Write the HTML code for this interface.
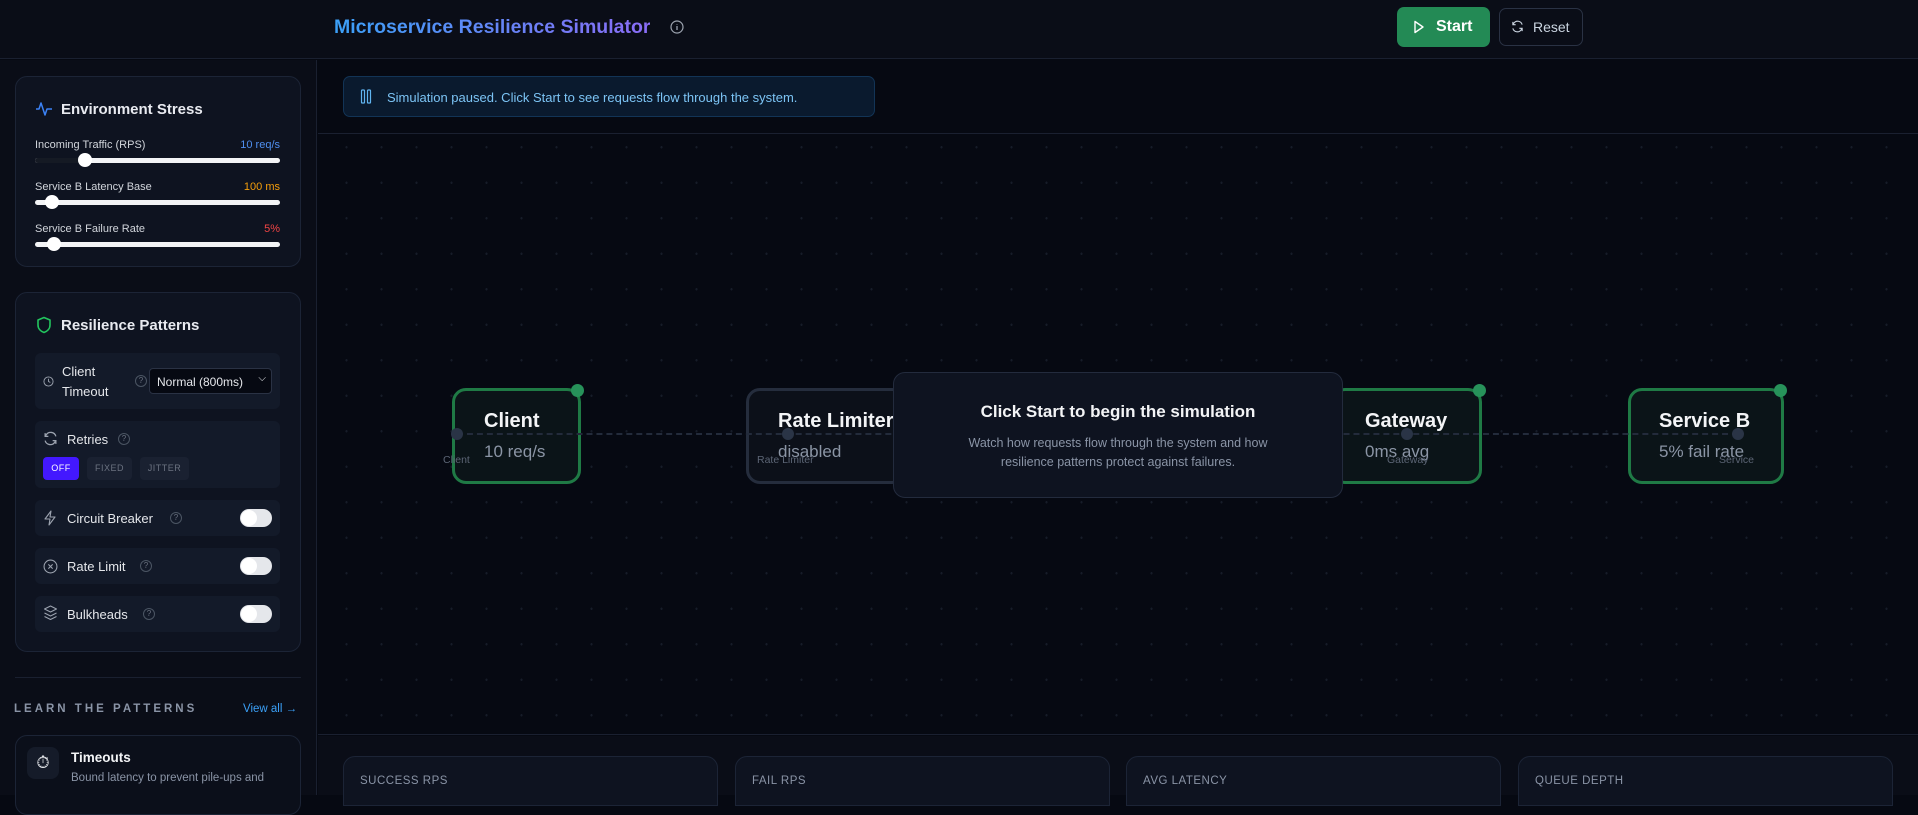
<!DOCTYPE html>
<html><head><meta charset="utf-8"><style>
*{box-sizing:border-box;margin:0;padding:0}
body{width:1918px;height:795px;overflow:hidden;background:#060912;font-family:"Liberation Sans",sans-serif;color:#e5e7eb;position:relative}
.a{position:absolute}
.hdr{left:0;top:0;width:1918px;height:59px;background:#0a0d17;border-bottom:1px solid #1a2030}
.title{left:334px;top:16px;font-size:19.5px;font-weight:bold;background:linear-gradient(90deg,#3ba0f7,#8a6cf6);-webkit-background-clip:text;color:transparent}
.side{left:0;top:60px;width:317px;height:735px;background:#0a0d17;border-right:1px solid #1a2030}
.card{background:#0e1320;border:1px solid #1c2436;border-radius:12px}
.h{font-size:15px;font-weight:bold;color:#e8eaf0}
.lbl{font-size:11px;color:#d1d5db}
.val{font-size:11px}
.track{height:5px;background:#f3f4f6;border-radius:3px}
.thumb{width:14px;height:14px;border-radius:50%;background:#fff;top:-5px}
.row{background:#131a29;border-radius:6px;left:35px;width:245px}
.tog{width:32px;height:18px;border-radius:9px;background:#e5e7eb}
.tog:before{content:"";position:absolute;left:1px;top:1px;width:16px;height:16px;border-radius:50%;background:#fff}
.q{width:12px;height:12px;border:1px solid #4b5563;border-radius:50%;font-size:8px;color:#6b7280;text-align:center;line-height:10px}
.rl{font-size:13px;color:#e5e7eb}
.pb{height:23px;border-radius:4px;font-size:9px;letter-spacing:.5px;text-align:center;line-height:23px;color:#6b7280;background:#1a2131}
.node{border-radius:14px;background:#0b1418;border:3px solid #1f7a45}
.nt{font-size:20px;font-weight:bold;color:#f3f4f6}
.ns{font-size:17px;color:#8b95a5}
.dot{width:12px;height:12px;border-radius:50%;background:#2a3446}
.gd{width:13px;height:13px;border-radius:50%;background:#27925a}
.sl{font-size:10.5px;color:#5c6575}
.stat{top:756px;height:50px;width:375px;background:#0e1320;border:1px solid #1c2436;border-radius:12px 12px 0 0}
.stat span{position:absolute;left:16px;top:18px;font-size:11.5px;color:#8a94a6;letter-spacing:.5px}
</style></head><body>
<div class="a hdr"></div>
<div class="a title">Microservice Resilience Simulator</div>
<svg class="a" style="left:670px;top:20px" width="14" height="14" viewBox="0 0 14 14"><circle cx="7" cy="7" r="6" fill="none" stroke="#9ca3af" stroke-width="1.2"/><path d="M7 6v4M7 4v.5" stroke="#9ca3af" stroke-width="1.3"/></svg>
<div class="a" style="left:1397px;top:7px;width:93px;height:40px;background:#238a55;border-radius:7px"></div>
<svg class="a" style="left:1413px;top:20px" width="12" height="14" viewBox="0 0 12 14"><path d="M2 1.5l8 5.5-8 5.5z" fill="none" stroke="#fff" stroke-width="1.4" stroke-linejoin="round"/></svg>
<div class="a" style="left:1436px;top:18px;font-size:16px;font-weight:bold;color:#fff">Start</div>
<div class="a" style="left:1499px;top:8px;width:84px;height:38px;border:1px solid #2a3244;border-radius:7px;background:#0a0d17"></div>
<svg class="a" style="left:1511px;top:20px" width="13" height="13" viewBox="0 0 14 14"><path d="M12 5A5 5 0 0 0 3 3.5L2 5M2 9a5 5 0 0 0 9 1.5L12 9M2 2v3h3M12 12V9H9" fill="none" stroke="#cbd5e1" stroke-width="1.2"/></svg>
<div class="a" style="left:1533px;top:19px;font-size:14px;color:#cbd5e1">Reset</div>

<div class="a side"></div>
<div class="a card" style="left:15px;top:76px;width:286px;height:191px"></div>
<svg class="a" style="left:35px;top:100px" width="18" height="18" viewBox="0 0 18 18"><path d="M1 9h3l2-6 4 12 2-6h5" fill="none" stroke="#3b82f6" stroke-width="1.5" stroke-linejoin="round"/></svg>
<div class="a h" style="left:61px;top:101px">Environment Stress</div>
<div class="a lbl" style="left:35px;top:139px">Incoming Traffic (RPS)</div><div class="a val" style="right:1638px;top:139px;color:#4f8ff0">10 req/s</div>
<div class="a track" style="left:35px;top:158px;width:245px"><div class="a" style="left:0;top:0;width:50px;height:5px;background:#151a24;border-radius:3px"></div><div class="a thumb" style="left:43px"></div></div>
<div class="a lbl" style="left:35px;top:181px">Service B Latency Base</div><div class="a val" style="right:1638px;top:181px;color:#f59e0b">100 ms</div>
<div class="a track" style="left:35px;top:200px;width:245px"><div class="a thumb" style="left:10px"></div></div>
<div class="a lbl" style="left:35px;top:223px">Service B Failure Rate</div><div class="a val" style="right:1638px;top:223px;color:#ef4444">5%</div>
<div class="a track" style="left:35px;top:242px;width:245px"><div class="a thumb" style="left:12px"></div></div>

<div class="a card" style="left:15px;top:292px;width:286px;height:360px"></div>
<svg class="a" style="left:36px;top:316px" width="16" height="18" viewBox="0 0 16 18"><path d="M8 1.5L2 4v5c0 4 3 6.5 6 7.5 3-1 6-3.5 6-7.5V4z" fill="none" stroke="#22c55e" stroke-width="1.6" stroke-linejoin="round"/></svg>
<div class="a h" style="left:61px;top:317px">Resilience Patterns</div>
<div class="a row" style="top:353px;height:56px"></div>
<svg class="a" style="left:43px;top:376px" width="11" height="11" viewBox="0 0 12 12"><circle cx="6" cy="6" r="5" fill="none" stroke="#9ca3af"/><path d="M6 3v3l2 1" fill="none" stroke="#9ca3af"/></svg>
<div class="a rl" style="left:62px;top:362px;line-height:20px">Client<br>Timeout</div>
<div class="a q" style="left:135px;top:375px">?</div>
<div class="a" style="left:149px;top:368px;width:123px;height:26px;background:#060912;border:1px solid #2a3244;border-radius:4px;font-size:12px;color:#e5e7eb;padding:6px 7px">Normal (800ms) <span style="position:absolute;right:5px;top:4px;font-size:10px">&#x2335;</span></div>
<div class="a row" style="top:421px;height:67px"></div>
<svg class="a" style="left:43px;top:431px" width="15" height="15" viewBox="0 0 14 14"><path d="M12 5A5 5 0 0 0 3 3.5L2 5M2 9a5 5 0 0 0 9 1.5L12 9M2 2v3h3M12 12V9H9" fill="none" stroke="#9ca3af" stroke-width="1.2"/></svg>
<div class="a rl" style="left:67px;top:432px">Retries</div>
<div class="a q" style="left:118px;top:433px">?</div>
<div class="a pb" style="left:43px;top:457px;width:36px;background:#4318ff;color:#fff">OFF</div>
<div class="a pb" style="left:87px;top:457px;width:45px">FIXED</div>
<div class="a pb" style="left:140px;top:457px;width:49px">JITTER</div>
<div class="a row" style="top:500px;height:36px"></div>
<svg class="a" style="left:43px;top:510px" width="14" height="16" viewBox="0 0 14 16"><path d="M8 1L2 9h5l-1 6 6-8H7z" fill="none" stroke="#9ca3af" stroke-width="1.1" stroke-linejoin="round"/></svg>
<div class="a rl" style="left:67px;top:511px">Circuit Breaker</div><div class="a q" style="left:170px;top:512px">?</div>
<div class="a tog" style="left:240px;top:509px"></div>
<div class="a row" style="top:548px;height:36px"></div>
<svg class="a" style="left:43px;top:559px" width="15" height="15" viewBox="0 0 14 14"><circle cx="7" cy="7" r="6" fill="none" stroke="#9ca3af"/><path d="M5 5l4 4M9 5l-4 4" stroke="#9ca3af"/></svg>
<div class="a rl" style="left:67px;top:559px">Rate Limit</div><div class="a q" style="left:140px;top:560px">?</div>
<div class="a tog" style="left:240px;top:557px"></div>
<div class="a row" style="top:596px;height:36px"></div>
<svg class="a" style="left:43px;top:605px" width="15" height="16" viewBox="0 0 14 16"><path d="M7 1l6 3-6 3-6-3zM1 8l6 3 6-3M1 11.5l6 3 6-3" fill="none" stroke="#9ca3af" stroke-linejoin="round"/></svg>
<div class="a rl" style="left:67px;top:607px">Bulkheads</div><div class="a q" style="left:143px;top:608px">?</div>
<div class="a tog" style="left:240px;top:605px"></div>
<div class="a" style="left:15px;top:677px;width:286px;height:1px;background:#1a2030"></div>
<div class="a" style="left:14px;top:703px;font-size:11.5px;letter-spacing:3px;color:#8a94a6;font-weight:bold">LEARN THE PATTERNS</div>
<div class="a" style="left:243px;top:703px;font-size:11.5px;color:#3ba0f7">View all →</div>
<div class="a card" style="left:15px;top:735px;width:286px;height:80px;background:#0b0f1a"></div>
<div class="a" style="left:27px;top:747px;width:32px;height:32px;background:#151b29;border-radius:8px;text-align:center;line-height:32px;font-size:17px">⏱</div>
<div class="a" style="left:71px;top:750px;font-size:13.5px;font-weight:bold;color:#f3f4f6">Timeouts</div>
<div class="a" style="left:71px;top:772px;font-size:11.5px;color:#8a94a6">Bound latency to prevent pile-ups and</div>

<div class="a" style="left:318px;top:60px;width:1600px;height:74px;background:#060912;border-bottom:1px solid #1a2030"></div>
<div class="a" style="left:343px;top:76px;width:532px;height:41px;background:#0a1a2e;border:1px solid #123456;border-radius:7px"></div>
<svg class="a" style="left:360px;top:89px" width="12" height="15" viewBox="0 0 12 15"><rect x="1.5" y="1" width="3" height="13" rx=".8" fill="none" stroke="#60b4f0" stroke-width="1.2"/><rect x="7.5" y="1" width="3" height="13" rx=".8" fill="none" stroke="#60b4f0" stroke-width="1.2"/></svg>
<div class="a" style="left:387px;top:90px;font-size:13px;color:#7cc4f5">Simulation paused. Click Start to see requests flow through the system.</div>
<div class="a" style="left:318px;top:135px;width:1600px;height:600px;background-color:#060912;background-image:radial-gradient(#161c29 1px,transparent 1.3px);background-size:35px 35.5px;background-position:11px 30px;border-bottom:1px solid #1a2030"></div>
<div class="a" style="left:318px;top:736px;width:1600px;height:59px;background:#0a0d17"></div>
<div class="a stat" style="left:343px"><span>SUCCESS RPS</span></div>
<div class="a stat" style="left:735px"><span>FAIL RPS</span></div>
<div class="a stat" style="left:1126px"><span>AVG LATENCY</span></div>
<div class="a stat" style="left:1518px"><span>QUEUE DEPTH</span></div>

<div class="a node" style="left:452px;top:388px;width:129px;height:96px"></div>
<div class="a node" style="left:746px;top:388px;width:160px;height:96px;border-color:#252d3d;background:#0c1019"></div>
<div class="a node" style="left:1331px;top:388px;width:151px;height:96px"></div>
<div class="a node" style="left:1628px;top:388px;width:156px;height:96px"></div>
<div class="a" style="left:457px;top:433px;width:1281px;border-top:2px dashed #232b3b"></div>
<div class="a nt" style="left:484px;top:410px">Client</div><div class="a ns" style="left:484px;top:442px">10 req/s</div>
<div class="a nt" style="left:778px;top:410px">Rate Limiter</div><div class="a ns" style="left:778px;top:442px">disabled</div>
<div class="a nt" style="left:1365px;top:410px">Gateway</div><div class="a ns" style="left:1365px;top:442px">0ms avg</div>
<div class="a nt" style="left:1659px;top:410px">Service B</div><div class="a ns" style="left:1659px;top:442px">5% fail rate</div>
<div class="a dot" style="left:451px;top:428px"></div><div class="a sl" style="left:443px;top:454px">Client</div>
<div class="a dot" style="left:782px;top:428px"></div><div class="a sl" style="left:757px;top:454px">Rate Limiter</div>
<div class="a dot" style="left:1401px;top:428px"></div><div class="a sl" style="left:1387px;top:454px">Gateway</div>
<div class="a dot" style="left:1732px;top:428px"></div><div class="a sl" style="left:1719px;top:454px">Service</div>
<div class="a gd" style="left:571px;top:384px"></div>
<div class="a gd" style="left:1473px;top:384px"></div>
<div class="a gd" style="left:1774px;top:384px"></div>
<div class="a" style="left:893px;top:372px;width:450px;height:126px;background:#0e1320;border:1px solid #232b3d;border-radius:12px;text-align:center">
<div style="margin-top:29px;font-size:17px;font-weight:bold;color:#f3f4f6">Click Start to begin the simulation</div>
<div style="margin-top:12px;font-size:12.5px;line-height:19px;color:#8a94a6">Watch how requests flow through the system and how<br>resilience patterns protect against failures.</div>
</div>
</body></html>
